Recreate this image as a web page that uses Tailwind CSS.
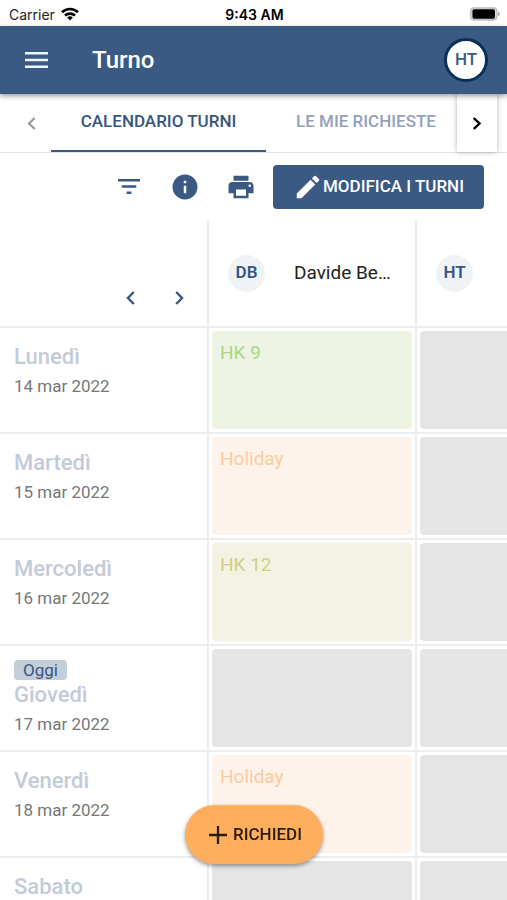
<!DOCTYPE html>
<html lang="it">
<head>
<meta charset="utf-8">
<meta name="viewport" content="width=device-width, initial-scale=1">
<title>Turno</title>
<script src="https://cdn.jsdelivr.net/npm/@tailwindcss/browser@4"></script>
</head>
<body class="flex h-screen flex-col overflow-hidden bg-white font-[Roboto,sans-serif] text-[#37567f]">

<!-- Status bar -->
<div class="grid h-[26px] shrink-0 grid-cols-3 items-center pt-0.5 pr-[7px] pl-[9px] font-[Inter,sans-serif] text-[14px] text-[#222]">
  <div class="flex items-center gap-1.5">
    <span>Carrier</span>
    <svg class="h-[14px] w-[18px]" viewBox="0 0 18 14" fill="none" stroke="#000" stroke-width="2.700" aria-hidden="true">
      <path d="M1 5.200a11.600 11.600 0 0 1 16 0M4 8.600a7.300 7.300 0 0 1 10 0"/>
      <path d="M9 13.400 6.200 10.600a4 4 0 0 1 5.600 0z" fill="#000" stroke="none"/>
    </svg>
  </div>
  <span class="text-center font-semibold whitespace-nowrap text-black">9:43 AM</span>
  <svg class="h-[14px] w-[30px] justify-self-end" viewBox="0 0 31 14" aria-hidden="true">
    <rect x=".8" y=".8" width="27" height="12.400" rx="3.500" fill="#ddd" stroke="#bdbdbd" stroke-width="1.400"/>
    <rect x="2.500" y="2.200" width="23.300" height="9.600" rx="1.800" fill="#000"/>
    <path d="M29 4.800q1.800.8 1.800 2.200T29 9.200z" fill="#a5a5a5"/>
  </svg>
</div>

<!-- App bar -->
<header class="relative z-10 flex h-[68px] shrink-0 items-center bg-[#3a5a83] pr-[19px] pl-[25px] text-white shadow-[0_2px_5px_rgba(0,0,0,0.4)]">
  <button class="w-[23px]" aria-label="Menu">
    <svg class="h-[16px] w-[23px]" viewBox="0 0 23 16" fill="#eef6ff"><path d="M0 0h23v2.600H0zM0 6.700h23v2.600H0zM0 13.400h23V16H0z"/></svg>
  </button>
  <h1 class="ml-11 flex-1 text-2xl font-medium">Turno</h1>
  <button class="flex size-[44px] items-center justify-center rounded-full border-[3px] border-[#0b3056] bg-white text-[17px] font-medium text-[#3a5a83]">HT</button>
</header>

<!-- Tabs -->
<nav class="flex h-[59px] shrink-0 items-stretch border-b border-[#e4e4e4] text-[17px] font-medium">
  <button class="flex w-[51px] shrink-0 items-center justify-center pl-3" aria-label="Scheda precedente">
    <svg class="h-[13px] w-[9px]" viewBox="0 0 9 13" fill="none" stroke="#999" stroke-width="2.200"><path d="M7.700 1 2 6.500l5.700 5.500"/></svg>
  </button>
  <div class="flex min-w-0 flex-1 overflow-hidden">
    <a href="#" class="flex w-[215px] shrink-0 items-center justify-center border-b-2 border-[#3a5a83] whitespace-nowrap">CALENDARIO TURNI</a>
    <a href="#" class="flex w-[200px] shrink-0 items-center justify-center border-b-2 border-transparent whitespace-nowrap text-[#93a1bd]">LE MIE RICHIESTE</a>
  </div>
  <button class="mr-[10px] flex w-[40px] shrink-0 items-center justify-center bg-white shadow-[0_0_5px_rgba(0,0,0,0.3)]" aria-label="Scheda successiva">
    <svg class="h-[13px] w-[9px]" viewBox="0 0 9 13" fill="none" stroke="#000" stroke-width="2.400"><path d="M.8 1 6.500 6.500.8 12"/></svg>
  </button>
</nav>

<!-- Toolbar -->
<div class="flex h-[67px] shrink-0 items-center justify-end pr-[23px]">
  <button class="flex w-[56px] justify-center" aria-label="Filtra">
    <svg class="h-[15px] w-[22px]" viewBox="0 0 22 15" fill="#3a5a83"><path d="M0 0h22v2.500H0zM3.700 6.200h14.600v2.500H3.700zM8.600 12.400h4.800v2.500H8.600z"/></svg>
  </button>
  <button class="flex w-[56px] justify-center" aria-label="Informazioni">
    <svg class="size-[30px]" viewBox="0 0 24 24" fill="#3a5a83"><path d="M12 2a10 10 0 1 0 0 20 10 10 0 0 0 0-20zm1 15h-2v-6h2v6zm0-8h-2V7h2v2z"/></svg>
  </button>
  <button class="flex w-[56px] justify-center" aria-label="Stampa">
    <svg class="size-[30px]" viewBox="0 0 24 24" fill="#3a5a83"><path d="M19 8H5c-1.660 0-3 1.340-3 3v6h4v4h12v-4h4v-6c0-1.660-1.340-3-3-3zm-3 11H8v-5h8v5zm3-7c-.55 0-1-.45-1-1s.45-1 1-1 1 .45 1 1-.45 1-1 1zm-1-9H6v4h12V3z"/></svg>
  </button>
  <button class="ml-1 flex h-[44px] w-[211px] items-center justify-center rounded bg-[#3a5a83] text-[17px] font-medium whitespace-nowrap text-white">
    <svg class="size-[30px]" viewBox="0 0 24 24" fill="#fff" aria-hidden="true"><path d="M3 17.250V21h3.750L17.810 9.940l-3.750-3.750L3 17.250zM20.710 7.040a1 1 0 0 0 0-1.410l-2.340-2.340a1 1 0 0 0-1.410 0l-1.830 1.830 3.750 3.750 1.830-1.830z"/></svg>
    MODIFICA I TURNI
  </button>
</div>

<!-- Shift calendar -->
<main class="min-h-0 flex-1 overflow-hidden">
  <table class="w-[625px] table-fixed border-separate border-spacing-0 text-left [&_td]:border-r-2 [&_td]:border-b-2 [&_td]:border-[#ededed] [&_td]:p-[3px] [&_th]:border-r-2 [&_th]:border-b-2 [&_th]:border-[#ededed] [&_th]:font-normal">
    <colgroup><col class="w-[209px]"><col class="w-[208px]"><col class="w-[208px]"></colgroup>
    <thead>
      <tr class="h-[108px]">
        <th class="align-bottom">
          <div class="flex justify-end gap-[40px] pr-[23px] pb-[21px]">
            <button aria-label="Settimana precedente"><svg class="h-[14px] w-[9px]" viewBox="0 0 9 14" fill="none" stroke="#3a5a83" stroke-width="2.500"><path d="M7.800 1 2 7l5.800 6"/></svg></button>
            <button aria-label="Settimana successiva"><svg class="h-[14px] w-[9px]" viewBox="0 0 9 14" fill="none" stroke="#3a5a83" stroke-width="2.500"><path d="M1.200 1 7 7l-5.800 6"/></svg></button>
          </div>
        </th>
        <th class="align-middle">
          <div class="flex items-center pr-5 pl-[19px]">
            <span class="flex size-[37px] shrink-0 items-center justify-center rounded-full bg-[#eff3f6] text-[17px] font-semibold">DB</span>
            <span class="ml-[29px] truncate text-[19px] text-[#222]">Davide Bernardi</span>
          </div>
        </th>
        <th class="align-middle">
          <div class="flex items-center pl-[19px]">
            <span class="flex size-[37px] shrink-0 items-center justify-center rounded-full bg-[#eff3f6] text-[17px] font-semibold">HT</span>
          </div>
        </th>
      </tr>
    </thead>
    <tbody class="[&_th]:pt-[14px] [&_th]:pl-[14px] [&_th]:align-top [&_th>b]:block [&_th>b]:text-[22px] [&_th>b]:leading-[30px] [&_th>b]:font-medium [&_th>b]:text-[#c3cad9] [&_th>time]:block [&_th>time]:text-[17px] [&_th>time]:leading-[28px] [&_th>time]:text-[#777] [&_td>div]:h-[98px] [&_td>div]:rounded [&_td>div]:px-2 [&_td>div]:py-2 [&_td>div]:text-[19px] [&_td>div]:leading-7">
      <tr class="h-[106px]">
        <th scope="row"><b>Lunedì</b><time datetime="2022-03-14">14 mar 2022</time></th>
        <td><div class="bg-[#edf4e4] text-[#add583]">HK 9</div></td>
        <td><div class="bg-[#e5e5e5]"></div></td>
      </tr>
      <tr class="h-[106px]">
        <th scope="row"><b>Martedì</b><time datetime="2022-03-15">15 mar 2022</time></th>
        <td><div class="bg-[#fef3ea] text-[#fbcb9d]">Holiday</div></td>
        <td><div class="bg-[#e5e5e5]"></div></td>
      </tr>
      <tr class="h-[106px]">
        <th scope="row"><b>Mercoledì</b><time datetime="2022-03-16">16 mar 2022</time></th>
        <td><div class="bg-[#f4f3e3] text-[#ced083]">HK 12</div></td>
        <td><div class="bg-[#e5e5e5]"></div></td>
      </tr>
      <tr class="h-[106px]">
        <th scope="row"><span class="block h-[20px] w-[53px] rounded bg-[#c3cedb] text-center text-[17px] leading-[20px]">Oggi</span><b>Giovedì</b><time datetime="2022-03-17">17 mar 2022</time></th>
        <td><div class="bg-[#e5e5e5]"></div></td>
        <td><div class="bg-[#e5e5e5]"></div></td>
      </tr>
      <tr class="h-[106px]">
        <th scope="row"><b>Venerdì</b><time datetime="2022-03-18">18 mar 2022</time></th>
        <td><div class="bg-[#fef3ea] text-[#fbcb9d]">Holiday</div></td>
        <td><div class="bg-[#e5e5e5]"></div></td>
      </tr>
      <tr class="h-[106px]">
        <th scope="row"><b>Sabato</b><time datetime="2022-03-19">19 mar 2022</time></th>
        <td><div class="bg-[#e5e5e5]"></div></td>
        <td><div class="bg-[#e5e5e5]"></div></td>
      </tr>
    </tbody>
  </table>
</main>

<!-- Request button -->
<button class="fixed bottom-[36px] left-1/2 z-20 flex h-[59px] w-[138px] -translate-x-1/2 items-center justify-center gap-[6px] rounded-full bg-[#feaf5e] pl-1 text-[17px] font-medium text-[#2b1c0c] shadow-[0_2px_4px_rgba(0,0,0,0.4)]">
  <svg class="size-[18px]" viewBox="0 0 18 18" fill="none" stroke="#2b1c0c" stroke-width="2.300" aria-hidden="true"><path d="M9 0v18M0 9h18"/></svg>
  RICHIEDI
</button>
</body>
</html>
